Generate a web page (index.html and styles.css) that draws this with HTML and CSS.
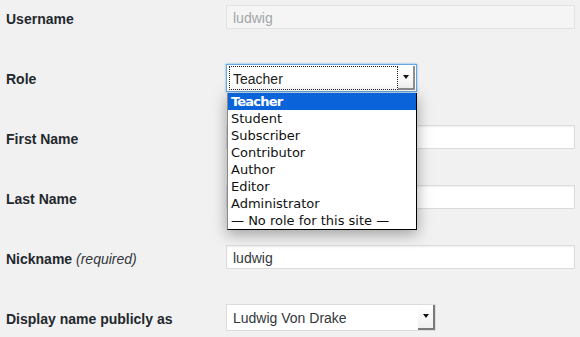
FILE: index.html
```html
<!DOCTYPE html>
<html>
<head>
<meta charset="utf-8">
<link rel="stylesheet" href="styles.css">
</head>
<body>
<div class="form">
  <div class="row">
    <div class="label">Username</div>
    <div class="field"><div class="text-input disabled">ludwig</div></div>
  </div>
  <div class="row">
    <div class="label">Role</div>
    <div class="field">
      <div class="role-select">
        <div class="role-value">Teacher</div>
        <div class="sel-btn"><span class="arrow"></span></div>
      </div>
      <ul class="dropdown">
        <li class="selected">Teacher</li>
        <li>Student</li>
        <li>Subscriber</li>
        <li>Contributor</li>
        <li>Author</li>
        <li>Editor</li>
        <li>Administrator</li>
        <li>— No role for this site —</li>
      </ul>
    </div>
  </div>
  <div class="row">
    <div class="label">First Name</div>
    <div class="field"><div class="text-input"></div></div>
  </div>
  <div class="row">
    <div class="label">Last Name</div>
    <div class="field"><div class="text-input"></div></div>
  </div>
  <div class="row">
    <div class="label">Nickname <span class="req">(required)</span></div>
    <div class="field"><div class="text-input">ludwig</div></div>
  </div>
  <div class="row">
    <div class="label">Display name publicly as</div>
    <div class="field">
      <div class="display-select">
        <div class="display-value">Ludwig Von Drake</div>
        <div class="sel-btn plain"><span class="arrow"></span></div>
      </div>
    </div>
  </div>
</div>
</body>
</html>
```

FILE: styles.css
```css
html, body {
  margin: 0;
  padding: 0;
  background: #f1f1f1;
  width: 580px;
  height: 337px;
  overflow: hidden;
}

.form {
  padding-top: 5px;
  display: flex;
  flex-direction: column;
  gap: 36px;
}

.row {
  display: flex;
  align-items: center;
  height: 24px;
}

.label {
  box-sizing: border-box;
  width: 226px;
  padding-left: 6px;
  padding-top: 4px;
  font-family: "Liberation Sans", Arial, sans-serif;
  font-weight: bold;
  font-size: 14px;
  color: #23282d;
}

.req {
  font-weight: normal;
  font-style: italic;
  color: #32373c;
}

.field {
  position: relative;
  height: 24px;
  display: flex;
  align-items: center;
}

.text-input {
  box-sizing: border-box;
  width: 349px;
  height: 24px;
  background: #fff;
  border: 1px solid #dcdcdc;
  box-shadow: inset 0 1px 2px rgba(0, 0, 0, 0.07);
  font-family: "Liberation Sans", Arial, sans-serif;
  font-size: 14px;
  line-height: 24px;
  padding-left: 6px;
  color: #32373c;
}

.text-input.disabled {
  background: #f5f5f5;
  border-color: #e2e2e2;
  box-shadow: none;
  color: #a2a5a8;
}

.role-select {
  box-sizing: border-box;
  width: 191px;
  height: 28px;
  margin-top: 2px;
  background: #fff;
  border: 1px solid #6aa6e0;
  box-shadow: 0 0 2px rgba(30, 140, 220, 0.7);
  display: flex;
  padding: 1px 1px 1px 2px;
}

.role-value {
  box-sizing: border-box;
  flex: 1;
  border: 1px dotted #222;
  font-family: "Liberation Sans", Arial, sans-serif;
  font-size: 14px;
  line-height: 24px;
  padding-left: 3px;
  color: #222;
}

.sel-btn {
  box-sizing: border-box;
  width: 17px;
  display: flex;
  align-items: center;
  justify-content: center;
  background: linear-gradient(#fff, #f2f2f2);
  box-shadow: inset -2px -2px 0 #8f8f8f;
  padding: 0 2px 2px 0;
}

.arrow {
  width: 0;
  height: 0;
  border-left: 3.5px solid transparent;
  border-right: 3.5px solid transparent;
  border-top: 4px solid #111;
}

.dropdown {
  position: absolute;
  left: 1px;
  top: 28px;
  width: 190px;
  margin: 0;
  padding: 0;
  list-style: none;
  box-sizing: border-box;
  background: #fff;
  border-left: 1px solid #8a8a8a;
  border-right: 1px solid #000;
  border-bottom: 1px solid #000;
  box-shadow: 0 4px 14px rgba(0, 0, 0, 0.35);
  z-index: 5;
}

.dropdown li {
  height: 17px;
  line-height: 18px;
  padding-left: 3px;
  font-family: "DejaVu Sans", sans-serif;
  font-size: 13px;
  color: #111;
  white-space: nowrap;
}

.dropdown li.selected {
  background: #0a63d8;
  color: #fff;
  font-weight: bold;
  letter-spacing: -0.8px;
}

.display-select {
  box-sizing: border-box;
  width: 210px;
  height: 27px;
  background: #fff;
  border: 1px solid #dcdcdc;
  display: flex;
}

.display-value {
  flex: 1;
  font-family: "Liberation Sans", Arial, sans-serif;
  font-size: 14px;
  line-height: 26px;
  padding-left: 6px;
  color: #32373c;
}

.sel-btn.plain {
  width: 17px;
  background: linear-gradient(#fff, #eee);
  box-shadow: inset -2px -2px 0 #7a7a7a;
}
```
